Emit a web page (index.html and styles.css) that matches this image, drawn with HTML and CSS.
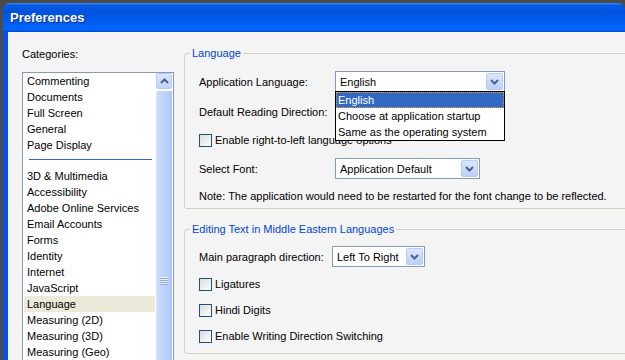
FILE: index.html
```html
<!DOCTYPE html>
<html lang="en">
<head>
	<meta charset="UTF-8">
	<title>Preferences</title>
	<link rel="stylesheet" href="styles.css">
</head>
<body>
	<div class="window">
		<div class="titlebar">Preferences</div>
		<div class="client">
			<div class="categories">
				<div class="caption">Categories:</div>
				<div class="listbox">
					<ul class="items">
						<li>Commenting</li>
						<li>Documents</li>
						<li>Full Screen</li>
						<li>General</li>
						<li>Page Display</li>
						<li class="sep"></li>
						<li>3D &amp; Multimedia</li>
						<li>Accessibility</li>
						<li>Adobe Online Services</li>
						<li>Email Accounts</li>
						<li>Forms</li>
						<li>Identity</li>
						<li>Internet</li>
						<li>JavaScript</li>
						<li class="selected">Language</li>
						<li>Measuring (2D)</li>
						<li>Measuring (3D)</li>
						<li>Measuring (Geo)</li>
					</ul>
					<div class="scrollbar">
						<div class="sb-btn">
							<svg width="9" height="6" viewBox="0 0 9 6"><path d="M1 5 L4.5 1.5 L8 5" fill="none" stroke="#4d6185" stroke-width="2"/></svg>
						</div>
						<div class="sb-thumb"><span class="grip"></span></div>
					</div>
				</div>
			</div>

			<div class="panel">
				<fieldset class="group">
					<legend>Language</legend>
					<div class="row r1">
						<span class="label">Application Language:</span>
						<div class="select w170">
							<span class="value">English</span>
							<span class="arrow"><svg width="9" height="6" viewBox="0 0 9 6"><path d="M1 1 L4.5 4.5 L8 1" fill="none" stroke="#4d6185" stroke-width="2"/></svg></span>
							<ul class="popup">
								<li class="hl">English</li>
								<li>Choose at application startup</li>
								<li>Same as the operating system</li>
							</ul>
						</div>
					</div>
					<div class="row r2">
						<span class="label">Default Reading Direction:</span>
					</div>
					<label class="check r3"><span class="box"></span>Enable right-to-left language options</label>
					<div class="row r4">
						<span class="label">Select Font:</span>
						<div class="select w145">
							<span class="value">Application Default</span>
							<span class="arrow"><svg width="9" height="6" viewBox="0 0 9 6"><path d="M1 1 L4.5 4.5 L8 1" fill="none" stroke="#4d6185" stroke-width="2"/></svg></span>
						</div>
					</div>
					<p class="note">Note: The application would need to be restarted for the font change to be reflected.</p>
				</fieldset>

				<fieldset class="group second">
					<legend>Editing Text in Middle Eastern Languages</legend>
					<div class="row r5">
						<span class="label narrow">Main paragraph direction:</span>
						<div class="select w93">
							<span class="value">Left To Right</span>
							<span class="arrow"><svg width="9" height="6" viewBox="0 0 9 6"><path d="M1 1 L4.5 4.5 L8 1" fill="none" stroke="#4d6185" stroke-width="2"/></svg></span>
						</div>
					</div>
					<label class="check c1"><span class="box"></span>Ligatures</label>
					<label class="check c2"><span class="box"></span>Hindi Digits</label>
					<label class="check c2"><span class="box"></span>Enable Writing Direction Switching</label>
				</fieldset>
			</div>
		</div>
	</div>
</body>
</html>
```

FILE: styles.css
```css
* {
	margin: 0;
	padding: 0;
	box-sizing: border-box;
}
body {
	background-color: #4b4b4b;
	overflow: hidden;
	font: 11px/14px "Liberation Sans", Arial, sans-serif;
	color: #000;
}
.window {
	margin: 3px 0 0 3px;
	width: 622px;
	background-color: #0a50e2;
	border-radius: 7px 7px 0 0;
	overflow: hidden;
}
.titlebar {
	height: 29px;
	line-height: 29px;
	padding-left: 7px;
	color: #fff;
	font-weight: bold;
	font-size: 13px;
	text-shadow: 1px 1px #0b2a8c;
	background: linear-gradient(#3d8ffb 0, #0a5ce8 2px, #0052db 30%, #005ef2 70%, #0066ff 92%, #0048cc 100%);
}
.client {
	display: flex;
	margin-left: 5px;
	height: 340px;
	padding: 14px 0 0 14px;
	background-color: #f4f4f4;
}

/* categories list */
.categories {
	width: 152px;
	flex-shrink: 0;
}
.caption {
	margin-top: 1px;
}
.listbox {
	display: flex;
	margin-top: 11px;
	height: 300px;
	border: 1px solid #7f9db9;
	background-color: #fff;
}
.items {
	list-style: none;
	flex: 1;
	padding: 0 1px;
}
.items li {
	height: 16px;
	line-height: 16px;
	padding-left: 3px;
	white-space: nowrap;
}
.items .sep {
	height: 15px;
	padding: 0;
	margin: 0 3px 0 5px;
	background: linear-gradient(#fff 6px, #316ac5 6px, #316ac5 7px, #fff 7px);
}
.items .selected {
	background-color: #ece9d8;
}
.scrollbar {
	width: 17px;
	padding-right: 1px;
	display: flex;
	flex-direction: column;
	background-color: #fefefe;
}
.sb-btn {
	height: 16px;
	display: flex;
	align-items: center;
	justify-content: center;
	border: 1px solid #b8cbf5;
	border-radius: 2px;
	background: linear-gradient(#dbe6fe, #c1d3fb);
}
.sb-thumb {
	flex: 1;
	margin-top: 2px;
	border-left: 1px solid #d9e4fd;
	border-right: 1px solid #aec3f4;
	background: linear-gradient(90deg, #cadcfd, #bad0fc 60%, #b1c7f7);
	padding-top: 186px;
	display: flex;
	justify-content: center;
}
.grip {
	width: 8px;
	height: 8px;
	background: repeating-linear-gradient(#eef4fe 0, #eef4fe 1px, #8ca6e4 1px, #8ca6e4 2px);
}

/* right side */
.panel {
	margin-left: 10px;
	margin-right: -80px;
	flex: 1;
}
.group {
	border: 1px solid #d0d0bf;
	border-radius: 3px;
	padding: 0 0 5px 14px;
	min-width: 0;
}
.group legend {
	margin-left: -9px;
	padding: 0 2px;
	color: #0046d5;
}
.second {
	margin-top: 13px;
	padding-bottom: 10px;
}
.row {
	display: flex;
	align-items: center;
	height: 21px;
}
.label {
	width: 136px;
	flex-shrink: 0;
}
.label.narrow {
	width: 133px;
}
.r1 { margin-top: 11px; }
.r2 { margin-top: 9px; }
.r3 { margin-top: 11px; }
.r4 { margin-top: 11px; }
.r5 { margin-top: 10px; }
.c1 { margin-top: 10px; }
.c2 { margin-top: 12px; }
.note {
	margin-top: 10px;
}

.select {
	position: relative;
	height: 21px;
	display: flex;
	align-items: center;
	border: 1px solid #7f9db9;
	background-color: #fff;
	padding: 1px;
}
.w170 { width: 170px; }
.w145 { width: 145px; }
.w93 { width: 93px; }
.select .value {
	flex: 1;
	padding-left: 3px;
	white-space: nowrap;
}
.select .arrow {
	width: 17px;
	height: 17px;
	display: flex;
	align-items: center;
	justify-content: center;
	border: 1px solid #b8cbf5;
	border-radius: 2px;
	background: linear-gradient(#dbe6fe, #bccffa);
}
.popup {
	position: absolute;
	top: 100%;
	left: -1px;
	width: 170px;
	list-style: none;
	border: 1px solid #000;
	background-color: #fff;
	z-index: 5;
}
.popup li {
	height: 16px;
	line-height: 16px;
	padding-left: 2px;
	white-space: nowrap;
}
.popup .hl {
	background-color: #316ac5;
	color: #fff;
	outline: 1px dotted #e8a33c;
	outline-offset: -1px;
}

.check {
	display: flex;
	align-items: center;
	height: 14px;
}
.check .box {
	width: 13px;
	height: 13px;
	margin-right: 3px;
	border: 1px solid #1c5180;
	background: linear-gradient(135deg, #dcdcd7, #fff);
}
```
